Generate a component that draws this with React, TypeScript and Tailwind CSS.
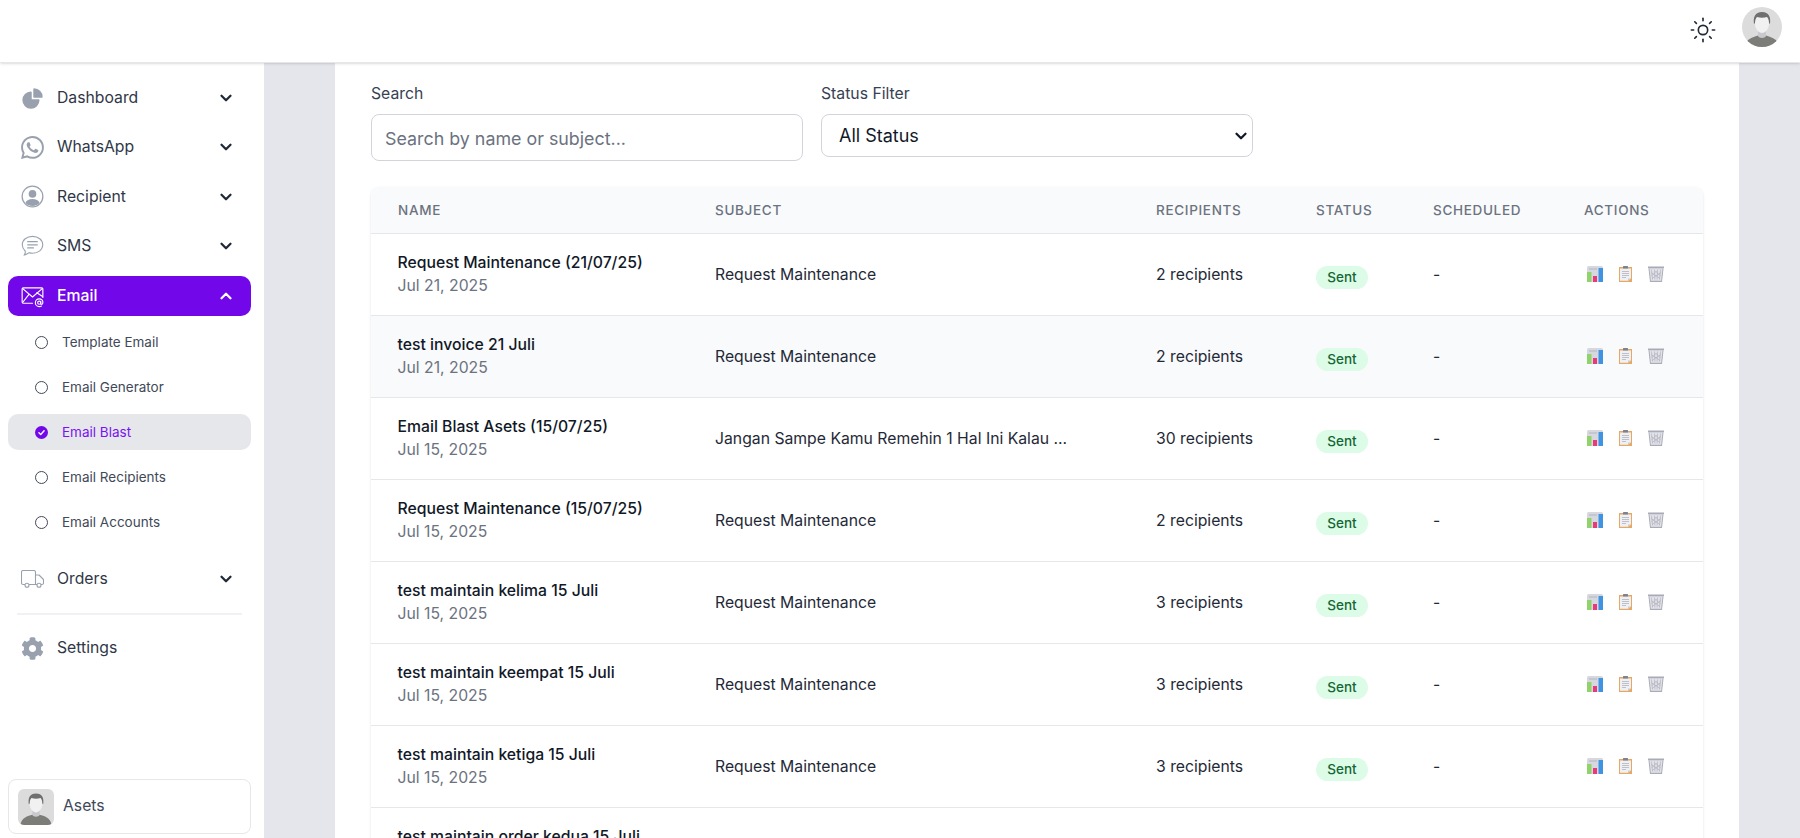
import React from "react";
import { ChevronDown, ChevronUp, Sun } from "lucide-react";
import { FaCog } from "react-icons/fa";
import { BsWhatsapp } from "react-icons/bs";
import { HiChartPie } from "react-icons/hi2";

function Avatar({ className }: { className: string }) {
  return (
    <svg viewBox="0 0 40 40" className={className}>
      <rect width="40" height="40" fill="#dcdcdc" />
      <path d="M3 40c0-6 5-9 10-10.500l3-1h8l3 1c5 1.500 10 4.500 10 10.500z" fill="#7c7c79" />
      <path d="M16 24h8v5c-1 2.500-7 2.500-8 0z" fill="#c9c9cd" />
      <path d="M13 12c0-3 3-4.500 7-4.500s7 1.500 7 4.500v5c0 5-4 9-7 9s-7-4-7-9z" fill="#f1f1f2" />
      <path d="M12 17c-1-7 1-12 8-12s9 5 8 12l-1-1c0-3-1-5-2-6-3 1-7 1-10 0-1 1-2 3-2 6z" fill="#6f6f6d" />
    </svg>
  );
}

const UserCircle = () => (
  <svg viewBox="0 0 24 24" className="w-[23px] h-[23px] text-gray-400">
    <circle cx="12" cy="12" r="10.800" fill="none" stroke="currentColor" strokeWidth="1.300" />
    <circle cx="12" cy="9.300" r="4" fill="currentColor" />
    <path d="M4.500 18.800c1-3 4-4.300 7.500-4.300s6.500 1.300 7.500 4.300c-2 2-4.700 3.200-7.500 3.200s-5.500-1.200-7.500-3.200z" fill="currentColor" />
  </svg>
);

const SmsIcon = () => (
  <svg viewBox="0 0 24 24" className="w-[23px] h-[23px] text-gray-400" fill="none" stroke="currentColor" strokeWidth="1.100" strokeLinecap="round">
    <path d="M12 2.500c6 0 10.700 3.700 10.700 8.800S18 20 12 20c-1.300 0-2.500-.2-3.500-.5-1.500 1.300-3 2-5 2.300.8-1.200 1.200-2.500 1-3.800C2.700 16.300 1.300 14 1.300 11.300 1.300 6.200 6 2.500 12 2.500z" />
    <path d="M7 8h10M7 11.300h10M7 14.600h6" strokeWidth="1.300" />
  </svg>
);

const MailIcon = () => (
  <svg viewBox="0 0 24 24" className="w-[23px] h-[23px] text-white" fill="none" stroke="currentColor" strokeWidth="1.200" strokeLinejoin="round" strokeLinecap="round">
    <path d="M12 19H2.500a1.300 1.300 0 0 1-1.300-1.300V4.300A1.300 1.300 0 0 1 2.500 3h19a1.300 1.300 0 0 1 1.300 1.300V13" />
    <path d="M1.500 3.500l10.500 9 10.500-9M1.500 18.500l7-9M22.500 12l-6-4" />
    <circle cx="19" cy="18.500" r="1.600" />
    <path d="M20.600 17v2.300c0 1.300 2 1.200 2.200-.8.300-2.500-1.500-4-3.800-4a4 4 0 0 0 0 8c1 0 1.600-.2 2.300-.6" />
  </svg>
);

const TruckIcon = () => (
  <svg viewBox="0 0 23 18" className="w-[23px] h-[18px] text-gray-400" fill="none" stroke="currentColor" strokeWidth="1.100" strokeLinejoin="round">
    <path d="M4 14.500H2A1.500 1.500 0 0 1 .5 13V2A1.500 1.500 0 0 1 2 .5h11A1.500 1.500 0 0 1 14.500 2v12.500H8" />
    <path d="M14.500 5H18l4.500 4.500V13a1.500 1.500 0 0 1-1.500 1.500h-1M16 14.500h-1.500" />
    <circle cx="6" cy="15.300" r="2" />
    <circle cx="18" cy="15.300" r="2" />
  </svg>
);

const ChartIcon = () => (
  <svg viewBox="0 0 16 16" className="w-4 h-4">
    <rect x="0" y="0" width="16" height="16" rx="1.500" fill="#d7d8df" />
    <rect x="2" y="2.500" width="8" height="1" fill="#b4b6c2" />
    <rect x="0" y="6" width="4.500" height="10" fill="#8fd36a" />
    <rect x="6" y="10" width="4" height="6" fill="#e83a78" />
    <rect x="11.500" y="2" width="4.500" height="14" fill="#3f93e0" />
  </svg>
);

const ClipIcon = () => (
  <svg viewBox="0 0 13 16" className="w-[13px] h-4">
    <rect x="0" y="1" width="13" height="15" fill="#e6a865" />
    <path d="M1 2.500h11v10l-3 2.200H1z" fill="#eff0f3" />
    <path d="M12 12.500l-3 2.200v-2.200z" fill="#c9ccd4" />
    <rect x="4" y="0" width="5" height="2.500" rx=".5" fill="#7d8190" />
    <path d="M3 5.500h7M3 7.500h7M3 9.500h7M3 11.500h4" stroke="#b0b3be" strokeWidth=".8" />
  </svg>
);

const TrashIcon = () => (
  <svg viewBox="0 0 16 16" className="w-4 h-4">
    <path d="M1 2h14L13.500 16h-11z" fill="#e2e3e8" />
    <path d="M3.500 3.500l1 10M6.500 3.500l.4 10M9.500 3.500l-.4 10M12.500 3.500l-1 10M3 6.500l9 6M13 6.500l-9 6M3.500 10l5-5M12.500 10l-5-5" stroke="#a9abb8" strokeWidth=".6" />
    <path d="M1 2.500L2.500 16M15 2.500L13.500 16" stroke="#a9abb8" strokeWidth="1" />
    <rect x="0" y="0.500" width="16" height="1.800" fill="#a9abb8" />
    <rect x="2.500" y="14.800" width="11" height="1.200" fill="#a9abb8" />
  </svg>
);

function NavItem({ icon, label, open, active, chevron = true }: { icon: React.ReactNode; label: string; open?: boolean; active?: boolean; chevron?: boolean }) {
  return (
    <div className={`flex items-center h-10 ml-2 mr-[13px] pl-[13px] pr-[16px] rounded-[10px] text-[15.750px] ${active ? "bg-[#7207e9] text-white font-medium" : "text-[#2f3747]"}`}>
      <span className="w-[23px] flex justify-center shrink-0">{icon}</span>
      <span className="ml-[13px] flex-1">{label}</span>
      {chevron && (open ? <ChevronUp size={18} strokeWidth={3} className="text-white" /> : <ChevronDown size={18} strokeWidth={3} className="text-[#1f2937]" />)}
    </div>
  );
}

function SubItem({ label, active }: { label: string; active?: boolean }) {
  return (
    <div className={`flex items-center h-9 ml-2 mr-[13px] pl-[27px] rounded-[10px] text-[13.500px] ${active ? "bg-[#e5e7eb] text-[#7c12f0]" : "text-[#414958]"}`}>
      {active ? (
        <svg viewBox="0 0 14 14" className="w-[13px] h-[13px]">
          <circle cx="7" cy="7" r="7" fill="#7207e9" />
          <path d="M4.200 7.200l2 1.900 3.600-3.900" fill="none" stroke="#fff" strokeWidth="1.500" strokeLinecap="round" strokeLinejoin="round" />
        </svg>
      ) : (
        <span className="w-[13px] h-[13px] rounded-full border border-[#414958]" />
      )}
      <span className="ml-[14px]">{label}</span>
    </div>
  );
}

const rows = [
  ["Request Maintenance (21/07/25)", "Jul 21, 2025", "Request Maintenance", "2 recipients"],
  ["test invoice 21 Juli", "Jul 21, 2025", "Request Maintenance", "2 recipients"],
  ["Email Blast Asets (15/07/25)", "Jul 15, 2025", "Jangan Sampe Kamu Remehin 1 Hal Ini Kalau ...", "30 recipients"],
  ["Request Maintenance (15/07/25)", "Jul 15, 2025", "Request Maintenance", "2 recipients"],
  ["test maintain kelima 15 Juli", "Jul 15, 2025", "Request Maintenance", "3 recipients"],
  ["test maintain keempat 15 Juli", "Jul 15, 2025", "Request Maintenance", "3 recipients"],
  ["test maintain ketiga 15 Juli", "Jul 15, 2025", "Request Maintenance", "3 recipients"],
  ["test maintain order kedua 15 Juli", "Jul 15, 2025", "Request Maintenance", "3 recipients"],
];

const heads: [string, string][] = [
  ["Name", "w-[317px] pl-[27px]"],
  ["Subject", "w-[441px] pl-[27px]"],
  ["Recipients", "w-[160px] pl-[27px]"],
  ["Status", "w-[117px] pl-[27px]"],
  ["Scheduled", "w-[151px] pl-[27px]"],
  ["Actions", "w-[146px] pl-[27px]"],
];

const Gap = () => <div className="h-[9.250px]" />;

export default function App() {
  return (
    <div className="h-[838px] overflow-hidden bg-white font-[Inter,sans-serif]">
      <header className="relative z-10 h-[63px] bg-white border-b border-[#e5e7eb] shadow-sm flex items-center justify-end">
        <Sun size={28} strokeWidth={1.400} className="text-[#1f2937] mr-[25px] mt-[-2px]" />
        <Avatar className="w-10 h-10 rounded-full mr-[18px] mb-[8px]" />
      </header>
      <div className="flex h-[775px]">
        <aside className="w-[264px] shrink-0 bg-white flex flex-col pt-[15px] pb-1">
          <NavItem icon={<HiChartPie className="w-[25px] h-[25px] shrink-0 text-gray-400" />} label="Dashboard" />
          <Gap />
          <NavItem icon={<BsWhatsapp className="w-[23px] h-[23px] text-gray-400" />} label="WhatsApp" />
          <Gap />
          <NavItem icon={<UserCircle />} label="Recipient" />
          <Gap />
          <NavItem icon={<SmsIcon />} label="SMS" />
          <div className="h-[10.250px]" />
          <NavItem icon={<MailIcon />} label="Email" open active />
          <div className="h-[8px]" />
          <div className="flex flex-col gap-[9px]">
            <SubItem label="Template Email" />
            <SubItem label="Email Generator" />
            <SubItem label="Email Blast" active />
            <SubItem label="Email Recipients" />
            <SubItem label="Email Accounts" />
          </div>
          <div className="h-[19px]" />
          <NavItem icon={<TruckIcon />} label="Orders" />
          <div className="ml-[17px] mr-[22px] mt-[14px] mb-[13px] border-t-2 border-[#f0f1f4]" />
          <NavItem icon={<FaCog className="w-[23px] h-[23px] text-gray-400" />} label="Settings" chevron={false} />
          <div className="mt-auto ml-2 mr-[13px] h-[55px] border border-[#e5e7eb] rounded-[8px] flex items-center pl-[9px]">
            <Avatar className="w-9 h-9 rounded-md" />
            <span className="ml-[9px] text-[#414958] text-[15.750px] mt-[-2px]">Asets</span>
          </div>
        </aside>
        <main className="flex-1 bg-[#e5e6eb] overflow-hidden pl-[71px] pr-[61px]">
          <div className="bg-white h-full px-9 pt-[21px]">
            <div className="flex gap-[18px] items-start">
              <label className="w-[432px] block">
                <span className="block text-[15.750px] leading-[19px] text-[#374151] mb-[11px]">Search</span>
                <input readOnly placeholder="Search by name or subject..." className="w-full h-[47px] rounded-[8px] border border-[#d1d5db] px-[13px] pt-px text-[17.850px] outline-none placeholder:text-[#6b7280]" />
              </label>
              <label className="w-[432px] block">
                <span className="block text-[15.750px] leading-[19px] text-[#374151] mb-[11px]">Status Filter</span>
                <span className="relative block">
                  <select className="appearance-none w-full h-[43px] rounded-[8px] border border-[#d1d5db] bg-white pl-[17px] pr-8 text-[18px] text-[#111827]">
                    <option>All Status</option>
                  </select>
                  <ChevronDown size={18} strokeWidth={3} className="absolute right-[3.500px] top-[13px] text-[#111827] pointer-events-none" />
                </span>
              </label>
            </div>
            <div className="mt-[26px] rounded-t-lg shadow-sm w-full">
              <table className="w-full table-fixed border-collapse">
                <thead>
                  <tr className="h-[46px] bg-[#f9fafb] border-b border-[#e5e7eb]">
                    {heads.map(([h, c], i) => (
                      <th key={h} className={`${c} pt-px text-left text-[13.500px] font-medium uppercase tracking-wider text-[#6b7280] ${i === 0 ? "rounded-tl-lg" : ""} ${i === 5 ? "rounded-tr-lg" : ""}`}>{h}</th>
                    ))}
                  </tr>
                </thead>
                <tbody>
                  {rows.map((r, i) => (
                    <tr key={i} className={`h-[82px] border-b border-[#e5e7eb] ${i === 1 ? "bg-[#f9fafb]" : "bg-white"}`}>
                      <td className="pl-[26.500px]">
                        <div className="text-[15.750px] leading-[23px] font-medium text-[#111827] whitespace-nowrap">{r[0]}</div>
                        <div className="text-[15.750px] leading-[23px] text-[#6b7280]">{r[1]}</div>
                      </td>
                      <td className="pl-[27px] pt-[2px] text-[15.750px] text-[#1f2937] whitespace-nowrap">{r[2]}</td>
                      <td className="pl-[27px] pt-[2px] text-[15.750px] text-[#1f2937]">{r[3]}</td>
                      <td className="pl-[27px]">
                        <span className="inline-flex items-center justify-center mt-[7px] w-[52px] h-[23px] rounded-full bg-[#dcfce7] text-[#166534] text-[13.500px] font-medium">Sent</span>
                      </td>
                      <td className="pl-[27px] pt-[2px] text-[15.750px] text-[#1f2937]">-</td>
                      <td className="pl-[30px]">
                        <div className="flex items-center gap-4">
                          <ChartIcon />
                          <ClipIcon />
                          <TrashIcon />
                        </div>
                      </td>
                    </tr>
                  ))}
                </tbody>
              </table>
            </div>
          </div>
        </main>
      </div>
    </div>
  );
}
